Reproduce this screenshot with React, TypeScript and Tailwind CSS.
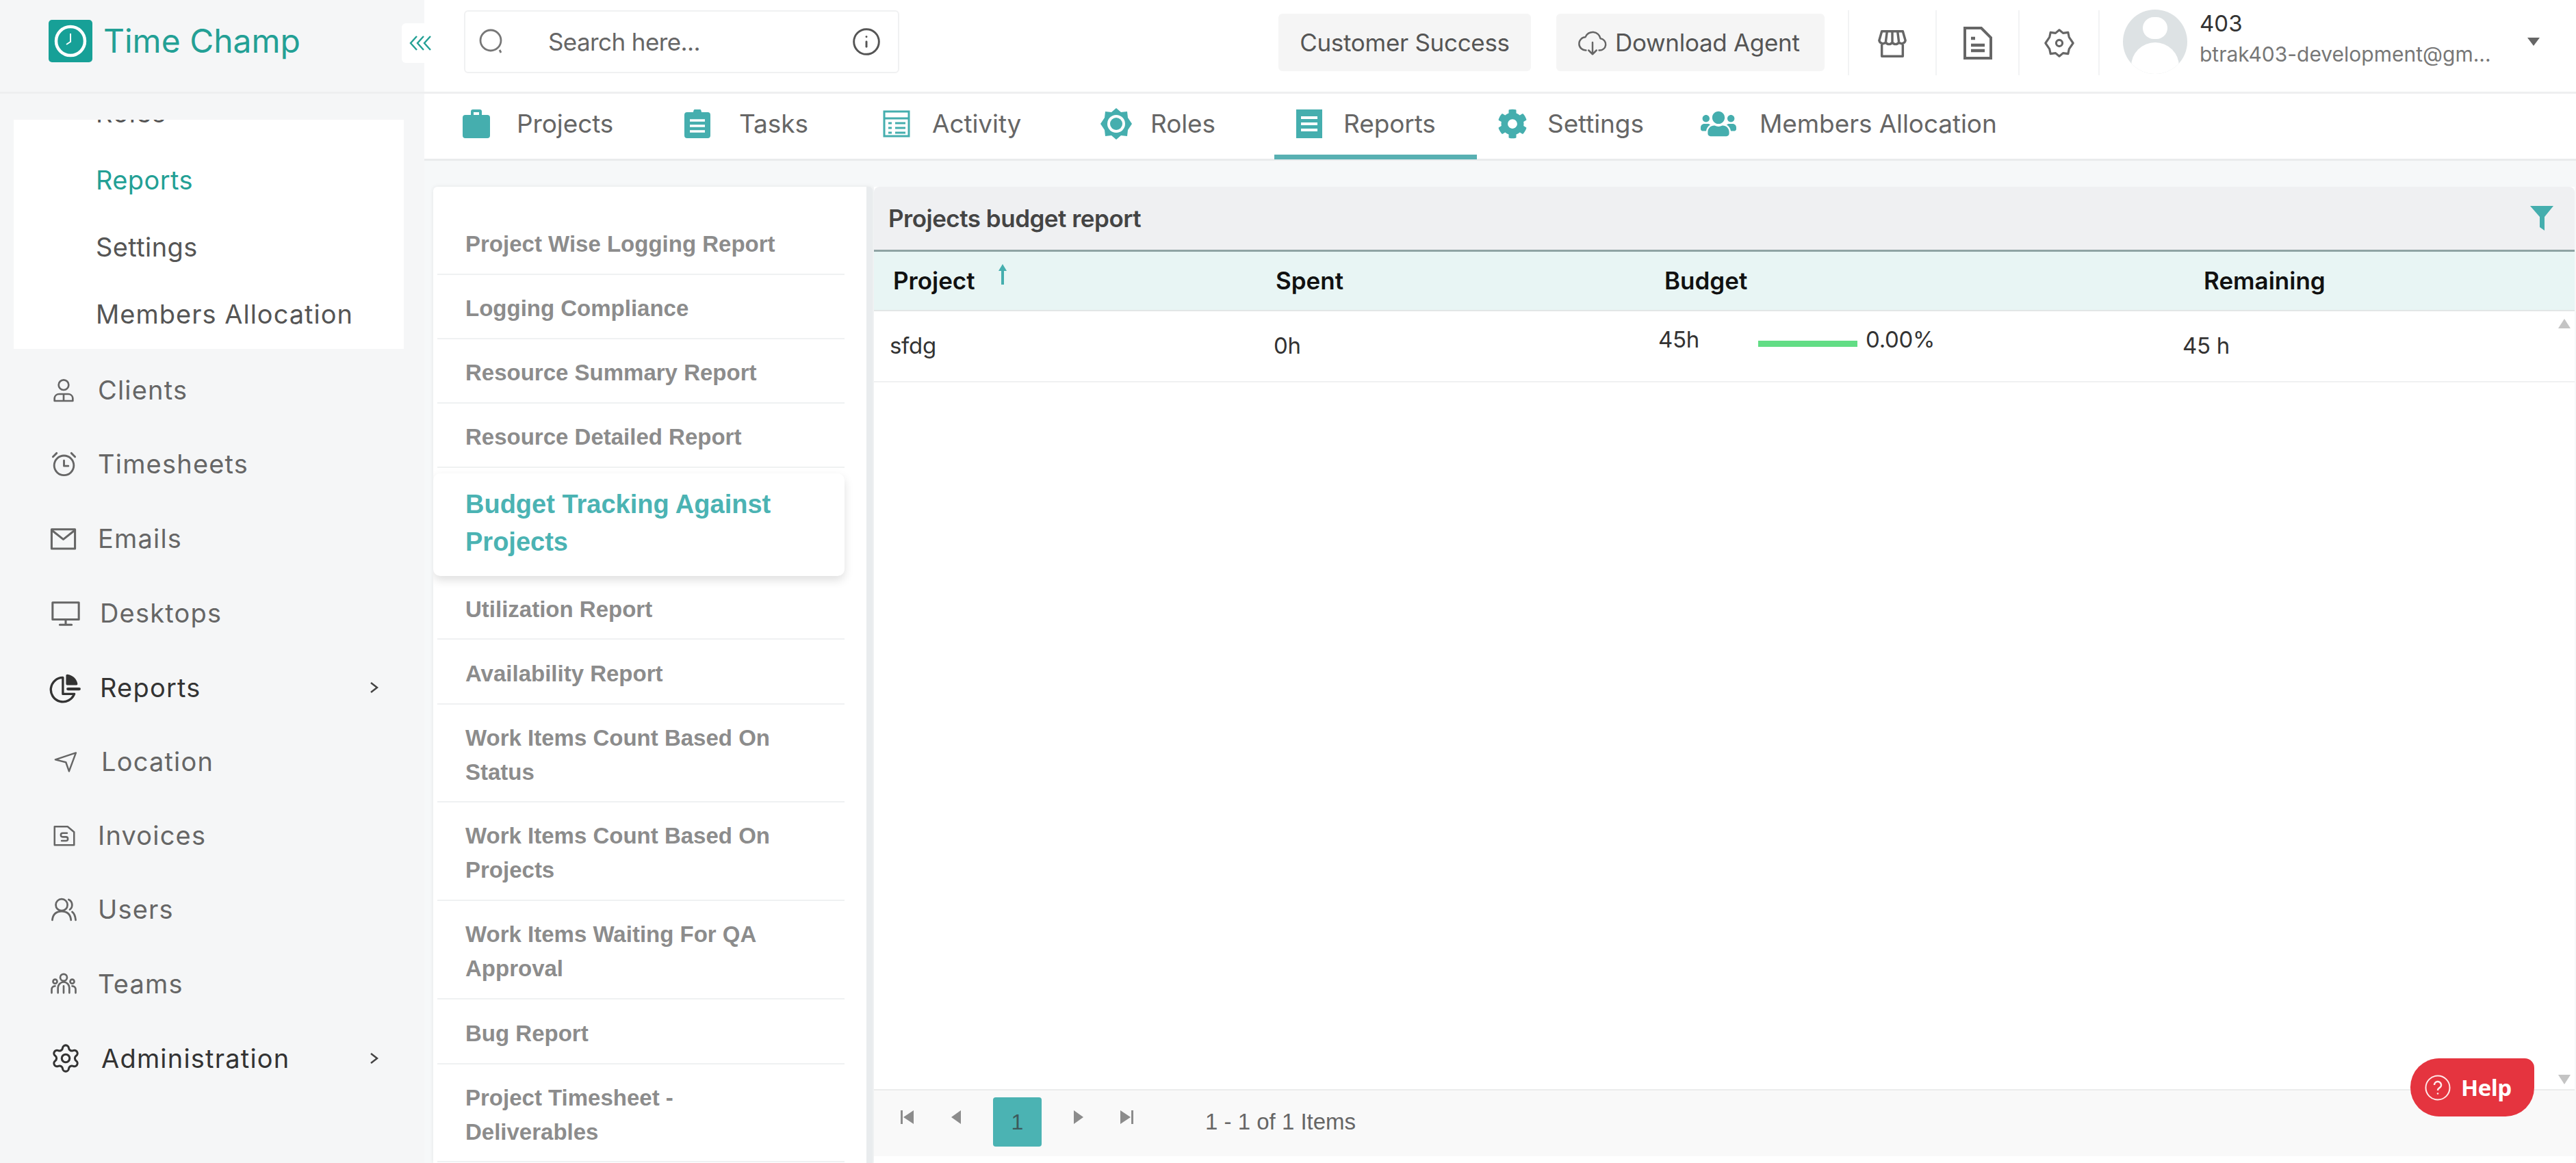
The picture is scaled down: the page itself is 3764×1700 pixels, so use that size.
import { Info, Settings } from "lucide-react";
import { FaCog, FaUsers } from "react-icons/fa";
import type { ReactNode } from "react";

function Svg({ size, children }: { size: number; children: ReactNode }) {
  return (
    <svg width={size} height={size} viewBox="0 0 24 24" fill="none" stroke="currentColor" strokeWidth={1.6} strokeLinecap="round" strokeLinejoin="round">
      {children}
    </svg>
  );
}

const sideIcons: Record<string, ReactNode> = {
  Clients: (
    <Svg size={40}>
      <circle cx="12" cy="7" r="4.400" />
      <path d="M4 21v-2.500a4 4 0 0 1 4-3.500h8a4 4 0 0 1 4 3.500V21zM12 15v6" />
    </Svg>
  ),
  Timesheets: (
    <Svg size={43}>
      <circle cx="12" cy="13" r="8" />
      <path d="M12 9v4.500h3.500M3 6l3-3M21 6l-3-3" />
    </Svg>
  ),
  Emails: (
    <Svg size={41}>
      <rect x="2" y="4" width="20" height="16.500" strokeWidth={1.8} />
      <path d="m2.500 5 9.500 7.500L21.500 5" strokeWidth={1.8} />
    </Svg>
  ),
  Desktops: (
    <Svg size={46}>
      <rect x="2" y="4" width="20" height="13" />
      <path d="M12 17v3.500M7.500 21h9" />
    </Svg>
  ),
  Reports: (
    <Svg size={50}>
      <path d="M10.500 5a8.500 8.500 0 1 0 8 11.500h-8z" />
      <path d="M13.500 3.500a7.500 7.500 0 0 1 6.500 6h-6.500z" fill="currentColor" />
      <path d="M14 13h8" strokeWidth={2} />
    </Svg>
  ),
  Location: (
    <Svg size={37}>
      <path d="M2.500 10 22 3.500 15.500 21l-3-8.500z" />
    </Svg>
  ),
  Invoices: (
    <Svg size={38}>
      <path d="M3 4h12l6 5v12H3z" />
      <path d="M14.500 10h-4a1.500 1.500 0 0 0 0 3.500h3a1.500 1.500 0 0 1 0 3.500h-4" />
    </Svg>
  ),
  Users: (
    <Svg size={41}>
      <circle cx="10" cy="8" r="5" />
      <path d="M2 21c.5-5 3.500-7.500 8-7.500s7.500 2.500 8 7.500M16 3.500a5 5 0 0 1 1 8.500M19 14c1.500 1.200 2.700 3.500 3 7" />
    </Svg>
  ),
  Teams: (
    <Svg size={40}>
      <circle cx="12" cy="6.500" r="3" />
      <circle cx="4.500" cy="10" r="1.800" />
      <circle cx="19.500" cy="10" r="1.800" />
      <path d="M7 20v-4.500a5 5 0 0 1 10 0V20M1.500 20v-3a3 3 0 0 1 3-3M22.500 20v-3a3 3 0 0 0-3-3M12 14v6" />
    </Svg>
  ),
  Administration: <Settings size={46} strokeWidth={1.6} />,
};

const sideItems = [
  { label: "Clients", h: "h-[107px]", pad: "w-[143px]", icon: "pl-[73px]" },
  { label: "Timesheets", h: "h-[109px]", pad: "w-[143px]", icon: "pl-[72px]" },
  { label: "Emails", h: "h-[108px]", pad: "w-[143px]", icon: "pl-[72px]" },
  { label: "Desktops", h: "h-[110px]", pad: "w-[146px]", icon: "pl-[73px]" },
  { label: "Reports", h: "h-[108px]", pad: "w-[146px]", icon: "pl-[70px]", dark: true, arrow: true },
  { label: "Location", h: "h-[108px]", pad: "w-[148px]", icon: "pl-[77px]" },
  { label: "Invoices", h: "h-[108px]", pad: "w-[143px]", icon: "pl-[75px]" },
  { label: "Users", h: "h-[108px]", pad: "w-[143px]", icon: "pl-[73px]" },
  { label: "Teams", h: "h-[110px]", pad: "w-[143px]", icon: "pl-[73px]" },
  { label: "Administration", h: "h-[108px]", pad: "w-[148px]", icon: "pl-[73px]", dark: true, arrow: true },
];

function Sidebar() {
  return (
    <aside className="w-[620px] shrink-0 bg-[#f5f6f7] flex flex-col">
      <div className="h-[137px] border-b-[3px] border-[#eeeff0] flex items-center pl-[71px] pb-[15px]">
        <svg width="64" height="62" viewBox="0 0 64 62">
          <rect width="64" height="62" rx="5" fill="#17a097" />
          <circle cx="32" cy="31" r="21" fill="none" stroke="#fff" strokeWidth="4.500" />
          <path d="M32 20v12l-6 4" stroke="#fff" strokeWidth="2" fill="none" />
        </svg>
        <span className="ml-[16px] text-[48px] leading-none text-[#23a095]">Time Champ</span>
      </div>

      <div className="ml-[20px] mt-[38px] w-[570px] h-[335px] bg-white overflow-hidden text-[38px] text-[#555] tracking-[1px]">
        <div className="-mt-[32px] pl-[120px]">
          <div className="h-[24px] leading-[24px] -mt-[8px] pt-[10px]">
            <span>Roles</span>
          </div>
          <div className="h-[98px] mt-[47px] leading-[98px] text-[#23a095] tracking-[0.4px]">Reports</div>
          <div className="h-[98px] leading-[98px] tracking-[0.4px]">Settings</div>
          <div className="h-[98px] leading-[98px]">Members Allocation</div>
        </div>
      </div>

      <nav className="mt-[7px] text-[38px] tracking-[1.2px]">
        {sideItems.map((it) => (
          <div key={it.label} className={`${it.h} flex items-center relative ${it.dark ? "text-[#333]" : "text-[#666]"}`}>
            <div className={`${it.pad} ${it.icon} shrink-0 flex items-center`}>{sideIcons[it.label]}</div>
            <span>{it.label}</span>
            {it.arrow && (
              <svg width="14" height="20" viewBox="0 0 14 20" className="ml-auto mr-[66px]" fill="none" stroke="#444" strokeWidth="2.500">
                <path d="m2 3 9 7-9 7" />
              </svg>
            )}
          </div>
        ))}
      </nav>
    </aside>
  );
}

const tabIconClass = "text-[#45aeae]";

const tabs: { label: string; w: string; box: string; active?: boolean; icon: ReactNode }[] = [
  {
    label: "Projects",
    w: "w-[324px]",
    box: "w-[79px]",
    icon: (
      <svg width="40" height="42" viewBox="0 0 40 42" className={tabIconClass}>
        <path d="M12 8V3a3 3 0 0 1 3-3h10a3 3 0 0 1 3 3v5h8a4 4 0 0 1 4 4v26a4 4 0 0 1-4 4H4a4 4 0 0 1-4-4V12a4 4 0 0 1 4-4zm4 0h8V4h-8z" fill="currentColor" fillRule="evenodd" />
      </svg>
    ),
  },
  {
    label: "Tasks",
    w: "w-[290px]",
    box: "w-[80px]",
    icon: (
      <svg width="38" height="42" viewBox="0 0 38 42" className={tabIconClass}>
        <path d="M13 4a6 6 0 0 1 12 0h9a4 4 0 0 1 4 4v30a4 4 0 0 1-4 4H4a4 4 0 0 1-4-4V8a4 4 0 0 1 4-4z" fill="currentColor" />
        <path d="M8 16h22M8 24h22M8 32h22" stroke="#fff" strokeWidth="3.500" />
      </svg>
    ),
  },
  {
    label: "Activity",
    w: "w-[318px]",
    box: "w-[72px]",
    icon: (
      <svg width="40" height="40" viewBox="0 0 40 40" fill="none" className={tabIconClass} stroke="currentColor" strokeWidth="3">
        <rect x="2" y="2" width="36" height="36" />
        <path d="M2 12h36M8 19h5M8 26h5M8 33h5M18 19h15M18 26h15M18 33h15" />
      </svg>
    ),
  },
  {
    label: "Roles",
    w: "w-[286px]",
    box: "w-[73px]",
    icon: (
      <svg width="46" height="46" viewBox="0 0 46 46" className={tabIconClass}>
        <path d="M23 0l7 6 9-1 1 9 6 9-6 9-1 9-9-1-7 6-7-6-9 1-1-9-6-9 6-9 1-9 9 1z" fill="currentColor" />
        <circle cx="23" cy="23" r="13" fill="#fff" />
        <circle cx="23" cy="23" r="9" fill="currentColor" />
      </svg>
    ),
  },
  {
    label: "Reports",
    w: "w-[294px]",
    box: "w-[69px]",
    active: true,
    icon: (
      <svg width="38" height="42" viewBox="0 0 38 42" className={tabIconClass}>
        <rect width="38" height="42" fill="currentColor" />
        <path d="M7 12h24M7 21h24M7 30h24" stroke="#fff" strokeWidth="4" />
      </svg>
    ),
  },
  {
    label: "Settings",
    w: "w-[297px]",
    box: "w-[73px]",
    icon: <FaCog size={44} className={tabIconClass} />,
  },
  {
    label: "Members Allocation",
    w: "w-[440px]",
    box: "w-[86px]",
    icon: <FaUsers size={52} className={tabIconClass} />,
  },
];

function HeaderBar() {
  return (
    <header className="h-[137px] shrink-0 bg-white border-b-[3px] border-[#eeeff0] flex items-start relative">
      {/* collapse toggle sits over the sidebar edge */}
      <div className="absolute -left-[33px] top-[34px] w-[58px] h-[58px] bg-white rounded-[6px] flex items-center justify-center text-[#23a095]">
        <svg width="38" height="24" viewBox="0 0 38 24" fill="none" stroke="currentColor" strokeWidth="2.400">
          <path d="m12 2-9 10 9 10M22 2l-9 10 9 10M32 2l-9 10 9 10" />
        </svg>
      </div>

      <div className="ml-[58px] mt-[15px] w-[636px] h-[92px] border-2 border-[#f0f1f2] rounded-[6px] flex items-center text-[#777]">
        <svg width="36" height="40" viewBox="0 0 36 40" fill="none" stroke="currentColor" strokeWidth="2.800" className="ml-[20px]">
          <circle cx="17" cy="18" r="15" />
          <path d="m30 32 2 4" />
        </svg>
        <span className="ml-[65px] text-[35px] text-[#666] tracking-[-0.6px]">Search here...</span>
        <Info size={44} strokeWidth={1.6} className="ml-auto mr-[24px] text-[#555]" />
      </div>

      <div className="ml-[554px] mt-[20px] w-[369px] h-[84px] rounded-[6px] bg-[#f5f5f5] flex items-center justify-center text-[35px] text-[#555] tracking-[-0.3px]">
        Customer Success
      </div>
      <div className="ml-[37px] mt-[20px] w-[392px] h-[84px] rounded-[6px] bg-[#f5f5f5] flex items-center pl-[30px] text-[35px] text-[#555] tracking-[-0.3px]">
        <svg width="46" height="46" viewBox="0 0 24 24" fill="none" stroke="#666" strokeWidth="1.300" strokeLinecap="round" strokeLinejoin="round">
          <path d="M7 18a5 5 0 0 1-.5-10A6 6 0 0 1 18 9a4.500 4.500 0 0 1-1 9M12 12v9M9 18l3 3 3-3" />
        </svg>
        <span className="ml-[10px]">Download Agent</span>
      </div>

      <div className="ml-[34px] mt-[15px] h-[95px] w-[130px] border-x-2 border-[#f2f3f4] flex items-center justify-center text-[#666]">
        <svg width="46" height="46" viewBox="0 0 24 24" fill="none" stroke="currentColor" strokeWidth="1.800" strokeLinejoin="round">
          <path d="M4 3h16l2 7a3 3 0 0 1-5 1.500 3 3 0 0 1-5 0 3 3 0 0 1-5 0A3 3 0 0 1 2 10zM4 13v9h16v-9M8 3l-1 8M12 3v8M16 3l1 8" />
        </svg>
      </div>
      <div className="mt-[15px] h-[95px] w-[121px] border-r-2 border-[#f2f3f4] flex items-center justify-center text-[#666]">
        <svg width="44" height="50" viewBox="0 0 22 25" fill="none" stroke="currentColor" strokeWidth="2">
          <path d="M1.500 1.500h12l7 7v15h-19z" />
          <path d="M6 9h3M6 14h10M6 18h10" strokeWidth="2.200" />
        </svg>
      </div>
      <div className="mt-[15px] h-[95px] w-[117px] border-r-2 border-[#f2f3f4] flex items-center justify-center text-[#666]">
        <svg width="44" height="44" viewBox="0 0 24 24" fill="none" stroke="currentColor" strokeWidth="1.700" strokeLinejoin="round">
          <path d="M12 1.500 15 4l4-.5.800 3.800L23 12l-3.200 4.700L19 20.500 15 20l-3 2.500L9 20l-4 .5-.8-3.800L1 12l3.200-4.700L5 3.500 9 4z" />
          <circle cx="12" cy="12" r="2.500" />
        </svg>
      </div>

      <div className="ml-[34px] mt-[14px] w-[94px] h-[94px] rounded-full bg-[#dde2e4] overflow-hidden flex flex-col items-center shrink-0">
        <div className="mt-[11px] w-[36px] h-[42px] rounded-full bg-white" />
        <div className="mt-[5px] w-[70px] h-[60px] rounded-t-full bg-white" />
      </div>
      <div className="ml-[18px] mt-[14px] w-[450px]">
        <div className="text-[33px] leading-[40px] text-[#333]">403</div>
        <div className="mt-[5px] text-[30px] leading-[40px] text-[#777] whitespace-nowrap">btrak403-development@gm...</div>
      </div>
      <svg width="18" height="12" viewBox="0 0 18 12" className="absolute right-[53px] top-[55px]">
        <path d="M0 0h18L9 12z" fill="#666" />
      </svg>
    </header>
  );
}

function TabBar() {
  return (
    <div className="h-[98px] shrink-0 bg-white border-b-[3px] border-[#e9ebec] flex items-stretch pl-[56px]">
      {tabs.map((t) => (
        <div key={t.label} className={`${t.w} shrink-0 relative flex items-center text-[37px] text-[#666] tracking-[-0.1px] whitespace-nowrap pb-[8px]`}>
          <div className={`${t.box} shrink-0 flex items-center`}>{t.icon}</div>
          <span>{t.label}</span>
          {t.active && <div className="absolute -left-[32px] w-[296px] -bottom-[1px] h-[7px] bg-[#58b0b2]" />}
        </div>
      ))}
    </div>
  );
}

const reports: { label: string; h: string; active?: boolean }[] = [
  { label: "Project Wise Logging Report", h: "h-[94px]" },
  { label: "Logging Compliance", h: "h-[94px]" },
  { label: "Resource Summary Report", h: "h-[94px]" },
  { label: "Resource Detailed Report", h: "h-[94px]" },
  { label: "Budget Tracking Against Projects", h: "h-[150px]", active: true },
  { label: "Utilization Report", h: "h-[93px]" },
  { label: "Availability Report", h: "h-[95px]" },
  { label: "Work Items Count Based On Status", h: "h-[143px]" },
  { label: "Work Items Count Based On Projects", h: "h-[144px]" },
  { label: "Work Items Waiting For QA Approval", h: "h-[144px]" },
  { label: "Bug Report", h: "h-[95px]" },
  { label: "Project Timesheet - Deliverables", h: "h-[143px]" },
];

function ReportList() {
  return (
    <div className="w-[642px] ml-[2px] shrink-0 h-full bg-white rounded-t-[6px] border-r-[9px] border-[#e9ecee] shadow-[0_0_6px_rgba(0,0,0,0.08)] pt-[35px] overflow-hidden font-['Liberation_Sans',Arial,sans-serif]">
      <div className="w-[601px]">
        {reports.map((r) =>
          r.active ? (
            <div key={r.label} className={`${r.h} mt-[8px] rounded-[10px] bg-white shadow-[0_6px_14px_rgba(0,0,0,0.13)] flex items-center pb-[4px] pl-[47px] pr-[90px] relative text-[38px] leading-[55px] font-bold text-[#4bb3b3]`}>
              {r.label}
            </div>
          ) : (
            <div key={r.label} className={`${r.h} ml-[6px] border-b-2 border-[#eff1f2] flex items-center pt-[6px] pl-[41px] pr-[94px] text-[33px] leading-[50px] font-bold text-[#8c8c8c]`}>
              {r.label}
            </div>
          ),
        )}
      </div>
    </div>
  );
}

function BudgetTable() {
  return (
    <div className="ml-[2px] w-[2485px] h-full flex flex-col bg-white relative">
      <div className="h-[95px] shrink-0 bg-[#eff0f2] rounded-t-[8px] border-b-[3px] border-[#8fa3a3] flex items-center justify-between pl-[21px] pr-[31px]">
        <span className="text-[35px] font-semibold text-[#444] tracking-[-0.5px]">Projects budget report</span>
        <svg width="34" height="36" viewBox="0 0 34 36">
          <path d="M0 0h34L21 16v20l-7-5V16z" fill="#45aeae" />
        </svg>
      </div>

      <div className="h-[87px] shrink-0 bg-[#e8f5f4] border-b-2 border-[#e2e6e6] flex items-center text-[35px] font-semibold text-[#111]">
        <div className="w-[587px] pl-[28px] flex items-start">
          <span>Project</span>
          <svg width="12" height="30" viewBox="0 0 12 30" className="ml-[34px] mt-[2px]" fill="#45aeae">
            <path d="M6 0l6 10H8v20H4V10H0z" />
          </svg>
        </div>
        <div className="w-[568px]">Spent</div>
        <div className="w-[788px]">Budget</div>
        <div>Remaining</div>
      </div>

      <div className="h-[104px] shrink-0 border-b-2 border-[#f0f1f2] flex items-center text-[33px] text-[#333] tracking-[-0.3px]">
        <div className="w-[584px] pl-[23px]">sfdg</div>
        <div className="w-[562px]">0h</div>
        <div className="w-[766px] flex items-center -mt-[18px]">
          <span className="w-[146px]">45h</span>
          <div className="w-[145px] h-[9px] mt-[10px] bg-[#62dd85]" />
          <span className="ml-[12px]">0.00%</span>
        </div>
        <div>45 h</div>
      </div>

      <div className="flex-1" />

      <div className="h-[98px] shrink-0 border-t-2 border-[#ebecec] bg-[#f9f9f9] flex items-center pb-[5px] text-[#8c8c8c] font-['Liberation_Sans',Arial,sans-serif]">
        <div className="w-[127px] flex items-center justify-end gap-[55px] -mt-[14px]">
          <svg width="19" height="20" viewBox="0 0 19 20" fill="currentColor"><path d="M0 0h3v20H0zM19 0v20L4 10z" /></svg>
          <svg width="14" height="20" viewBox="0 0 14 20" fill="currentColor"><path d="M14 0v20L0 10z" /></svg>
        </div>
        <div className="ml-[47px] w-[71px] h-[72px] rounded-[4px] bg-[#4bb3b3] flex items-center justify-center text-[32px] text-[#3d5a5c]">1</div>
        <div className="ml-[47px] flex items-center gap-[54px] -mt-[14px]">
          <svg width="14" height="20" viewBox="0 0 14 20" fill="currentColor"><path d="M0 0v20l14-10z" /></svg>
          <svg width="19" height="20" viewBox="0 0 19 20" fill="currentColor"><path d="M16 0h3v20h-3zM0 0v20l15-10z" /></svg>
        </div>
        <span className="ml-[105px] text-[33px] text-[#666]">1 - 1 of 1 Items</span>
      </div>
      <div className="h-[10px] shrink-0" />

      {/* scrollbar arrows and the help button float over the table */}
      <svg width="18" height="14" viewBox="0 0 18 14" className="absolute right-[6px] top-[193px]">
        <path d="M9 0l9 14H0z" fill="#c4c4c4" />
      </svg>
      <svg width="18" height="14" viewBox="0 0 18 14" className="absolute right-[6px] top-[1298px]">
        <path d="M0 0h18L9 14z" fill="#c4c4c4" />
      </svg>
      <div className="absolute left-[2245px] top-[1274px] w-[181px] h-[85px] bg-[#e5343f] rounded-tl-[42px] rounded-tr-[14px] rounded-bl-[42px] rounded-br-[42px] flex items-center text-white font-['Open_Sans',sans-serif]">
        <svg width="38" height="38" viewBox="0 0 38 38" className="ml-[21px]" fill="none" stroke="#ffe9e9" strokeWidth="2">
          <circle cx="19" cy="19" r="17.500" />
          <path d="M14 15a5 5 0 1 1 7 4.500c-1.500.8-2 1.500-2 3.500" strokeWidth="2.500" />
          <circle cx="19" cy="27.500" r="1.300" fill="#ffe9e9" stroke="none" />
        </svg>
        <span className="ml-[15px] text-[33px] font-bold tracking-[-0.5px]">Help</span>
      </div>
    </div>
  );
}

export default function App() {
  return (
    <div className="w-[3764px] h-[1700px] overflow-hidden flex bg-white font-['Inter',sans-serif]">
      <Sidebar />
      <main className="flex-1 flex flex-col min-w-0">
        <HeaderBar />
        <TabBar />
        <div className="flex-1 min-h-0 bg-[#f6f8f9] pl-[11px] pt-[38px] flex overflow-hidden">
          <ReportList />
          <BudgetTable />
        </div>
      </main>
    </div>
  );
}
